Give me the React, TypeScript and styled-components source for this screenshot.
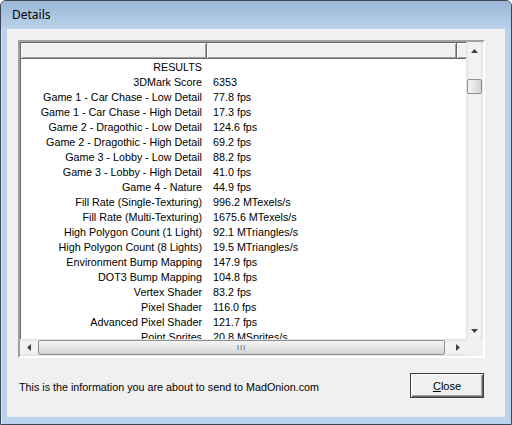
import React from 'react';
import styled, { createGlobalStyle } from 'styled-components';

const results: [string, string][] = [
  ['RESULTS', ''],
  ['3DMark Score', '6353'],
  ['Game 1 - Car Chase - Low Detail', '77.8 fps'],
  ['Game 1 - Car Chase - High Detail', '17.3 fps'],
  ['Game 2 - Dragothic - Low Detail', '124.6 fps'],
  ['Game 2 - Dragothic - High Detail', '69.2 fps'],
  ['Game 3 - Lobby - Low Detail', '88.2 fps'],
  ['Game 3 - Lobby - High Detail', '41.0 fps'],
  ['Game 4 - Nature', '44.9 fps'],
  ['Fill Rate (Single-Texturing)', '996.2 MTexels/s'],
  ['Fill Rate (Multi-Texturing)', '1675.6 MTexels/s'],
  ['High Polygon Count (1 Light)', '92.1 MTriangles/s'],
  ['High Polygon Count (8 Lights)', '19.5 MTriangles/s'],
  ['Environment Bump Mapping', '147.9 fps'],
  ['DOT3 Bump Mapping', '104.8 fps'],
  ['Vertex Shader', '83.2 fps'],
  ['Pixel Shader', '116.0 fps'],
  ['Advanced Pixel Shader', '121.7 fps'],
  ['Point Sprites', '20.8 MSprites/s'],
];

type Dir = 'up' | 'down' | 'left' | 'right';

const Arrow: React.FC<{ dir: Dir }> = ({ dir }) => {
  const pts: Record<Dir, string> = {
    up: '0,4 7,4 3.5,0',
    down: '0,0 7,0 3.5,4',
    left: '4,0 4,7 0,3.5',
    right: '0,0 0,7 4,3.5',
  };
  const vertical = dir === 'up' || dir === 'down';
  return (
    <svg width={vertical ? 7 : 4} height={vertical ? 4 : 7} viewBox={vertical ? '0 0 7 4' : '0 0 4 7'}>
      <polygon points={pts[dir]} fill="#404040" />
    </svg>
  );
};

const App: React.FC = () => {
  return (
    <>
      <GlobalStyle />
      <Window>
        <TitleBar>Details</TitleBar>
        <Client>
          <ListBox>
            <ListMain>
              <ListColumn>
                <Header>
                  <HeaderCell $width={186} />
                  <HeaderCell $width={250} />
                  <HeaderFiller />
                </Header>
                <Rows>
                  {results.map(([label, value]) => (
                    <Row key={label}>
                      <Label>{label}</Label>
                      <Value>{value}</Value>
                    </Row>
                  ))}
                </Rows>
              </ListColumn>
              <VScroll>
                <ArrowButton><Arrow dir="up" /></ArrowButton>
                <VTrack>
                  <VThumb />
                </VTrack>
                <ArrowButton><Arrow dir="down" /></ArrowButton>
              </VScroll>
            </ListMain>
            <BottomBar>
              <HScroll>
                <ArrowButton><Arrow dir="left" /></ArrowButton>
                <HTrack>
                  <HThumb>III</HThumb>
                </HTrack>
                <ArrowButton><Arrow dir="right" /></ArrowButton>
              </HScroll>
              <Corner />
            </BottomBar>
          </ListBox>
          <Footer>
            <Info>This is the information you are about to send to MadOnion.com</Info>
            <CloseButton>
              <u>C</u>lose
            </CloseButton>
          </Footer>
        </Client>
      </Window>
    </>
  );
};

const GlobalStyle = createGlobalStyle`
  html, body {
    margin: 0;
    padding: 0;
    background: #ffffff;
  }
  body {
    font-family: "Liberation Sans", Arial, sans-serif;
  }
`;

const Window = styled.div`
  width: 512px;
  height: 425px;
  box-sizing: border-box;
  border: 1px solid #3c4654;
  border-radius: 6px 6px 0 0;
  background: #bad2eb;
  box-shadow: inset 1px 1px 0 rgba(255, 255, 255, 0.55);
  display: flex;
  flex-direction: column;
  padding: 0 6px 7px 6px;
  overflow: hidden;
`;

const TitleBar = styled.div`
  height: 27px;
  margin: 0 -6px;
  padding: 0 0 1px 11px;
  display: flex;
  align-items: center;
  font-family: "Noto Sans", "Open Sans", sans-serif;
  font-size: 12px;
  color: #000;
  background: linear-gradient(to bottom, #9bb7d6 0%, #a9c3e0 45%, #bad2eb 100%);
  border-radius: 5px 5px 0 0;
`;

const Client = styled.div`
  flex: 1;
  background: #f0f0f0;
  padding: 11px 18px 0 11px;
  display: flex;
  flex-direction: column;
`;

const ListBox = styled.div`
  width: 467px;
  height: 318px;
  box-sizing: border-box;
  border-style: solid;
  border-width: 2px;
  border-color: #a0a0a0 #ffffff #ffffff #a0a0a0;
  box-shadow: inset 1px 1px 0 #696969, inset -1px -1px 0 #e3e3e3;
  background: #fff;
  display: flex;
  flex-direction: column;
`;

const ListMain = styled.div`
  flex: 1;
  display: flex;
  min-height: 0;
`;

const ListColumn = styled.div`
  flex: 1;
  display: flex;
  flex-direction: column;
  overflow: hidden;
  padding-left: 1px;
`;

const Header = styled.div`
  height: 17px;
  box-sizing: border-box;
  flex: none;
  display: flex;
  background: #f0f0f0;
  border-top: 1px solid #696969;
`;

const HeaderCell = styled.div<{ $width: number }>`
  width: ${(p) => p.$width}px;
  box-sizing: border-box;
  border-right: 1px solid #696969;
  border-bottom: 1px solid #696969;
  box-shadow: inset 1px 1px 0 #ffffff, inset -1px -1px 0 #a0a0a0;
`;

const HeaderFiller = styled.div`
  flex: 1;
  border-bottom: 1px solid #696969;
  box-shadow: inset 1px 1px 0 #ffffff, inset 0 -1px 0 #a0a0a0;
`;

const Rows = styled.div`
  flex: 1;
  overflow: hidden;
  font-size: 10.75px;
  color: #000;
`;

const Row = styled.div`
  height: 15px;
  display: grid;
  grid-template-columns: 186px 1fr;
  align-items: center;
  white-space: nowrap;
`;

const Label = styled.span`
  text-align: right;
  padding-right: 5px;
`;

const Value = styled.span`
  padding-left: 6px;
`;

const VScroll = styled.div`
  width: 17px;
  flex: none;
  display: flex;
  flex-direction: column;
  background: linear-gradient(to right, #e3e3e3, #f2f2f2 20%, #f2f2f2 80%, #e3e3e3);
`;

const ArrowButton = styled.div`
  width: 17px;
  height: 17px;
  flex: none;
  display: flex;
  align-items: center;
  justify-content: center;
`;

const VTrack = styled.div`
  flex: 1;
  padding-top: 20px;
`;

const VThumb = styled.div`
  width: 15px;
  height: 15px;
  margin-left: 1px;
  box-sizing: border-box;
  border: 1px solid #8e8f8f;
  border-radius: 2px;
  background: linear-gradient(to right, #f4f4f4, #e6e6e6 50%, #d2d2d2);
`;

const BottomBar = styled.div`
  height: 17px;
  flex: none;
  display: flex;
`;

const HScroll = styled.div`
  flex: 1;
  display: flex;
  background: linear-gradient(to bottom, #e3e3e3, #f2f2f2 20%, #f2f2f2 80%, #e3e3e3);
`;

const HTrack = styled.div`
  flex: 1;
  padding: 1px 4px 0 1px;
`;

const HThumb = styled.div`
  height: 15px;
  box-sizing: border-box;
  border: 1px solid #8e8f8f;
  border-radius: 2px;
  background: linear-gradient(to bottom, #f4f4f4, #e6e6e6 50%, #d2d2d2);
  display: flex;
  align-items: center;
  justify-content: center;
  font-size: 8px;
  letter-spacing: 1px;
  color: #606060;
  font-family: "Liberation Sans", Arial, sans-serif;
`;

const Corner = styled.div`
  width: 17px;
  background: #f0f0f0;
`;

const Footer = styled.div`
  width: 467px;
  margin-top: 15px;
  display: flex;
  align-items: center;
  justify-content: space-between;
`;

const Info = styled.span`
  font-size: 10.75px;
  color: #000;
  padding-left: 1px;
  padding-top: 3px;
`;

const CloseButton = styled.button`
  width: 74px;
  height: 25px;
  margin-right: 1px;
  box-sizing: border-box;
  border: 1px solid #3c3c3c;
  background: #f0f0f0;
  box-shadow: inset 1px 1px 0 #ffffff, inset -1px -1px 0 #696969, inset -2px -2px 0 #a0a0a0;
  font-family: "Liberation Sans", Arial, sans-serif;
  font-size: 11px;
  color: #000;
  padding: 0;
  cursor: pointer;
`;

export default App;
